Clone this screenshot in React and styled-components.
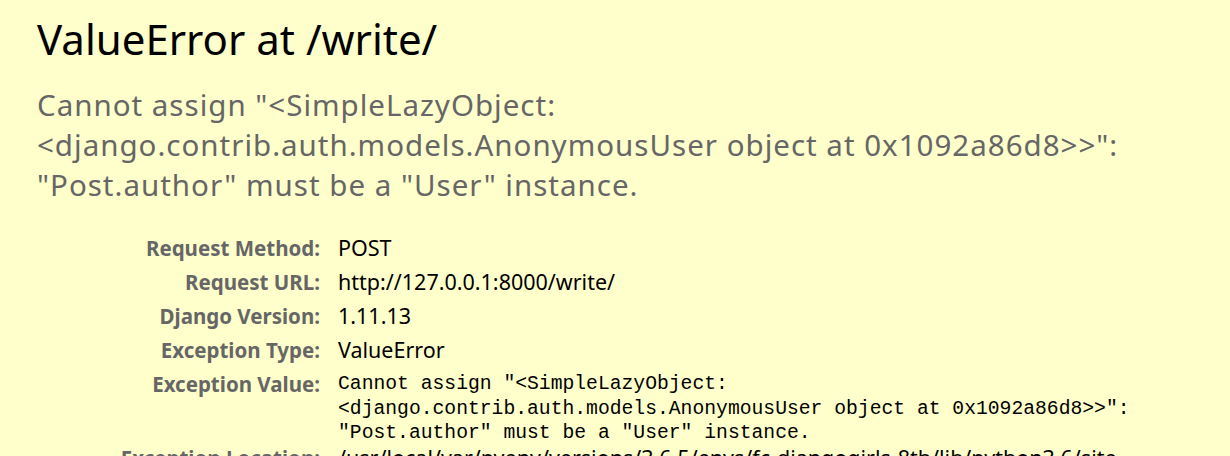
import React from 'react';
import styled, { createGlobalStyle } from 'styled-components';

const GlobalStyle = createGlobalStyle`
  html, body {
    margin: 0;
    padding: 0;
    background: #ffffcc;
  }
  body {
    font-family: "Noto Sans", "Liberation Sans", sans-serif;
    overflow: hidden;
  }
`;

const Summary = styled.div`
  background: #ffffcc;
  padding: 14px 37px 0;
  min-height: 456px;
  box-sizing: border-box;
`;

const Title = styled.h1`
  margin: 0;
  font-size: 42px;
  font-weight: 400;
  line-height: 50px;
  color: #000;
`;

const Message = styled.h2`
  margin: 21px 0 0;
  font-size: 29.5px;
  font-weight: 400;
  line-height: 40px;
  color: #666;
  letter-spacing: 1px;
`;

const Meta = styled.table`
  margin-top: 26px;
  border-collapse: collapse;
`;

const Label = styled.th`
  width: 283px;
  padding: 0 18px 0 0;
  text-align: right;
  vertical-align: top;
  font-size: 20.5px;
  font-weight: 700;
  line-height: 34px;
  color: #666;
  white-space: nowrap;
`;

const Value = styled.td`
  padding: 0;
  vertical-align: top;
  font-size: 21.5px;
  line-height: 34px;
  color: #000;
  white-space: nowrap;
`;

const Pre = styled.pre`
  margin: 5px 0 -5px;
  font-family: "Liberation Mono", "Courier New", monospace;
  font-size: 19.7px;
  line-height: 24.5px;
  color: #000;
`;

const rows = [
  { label: 'Request Method:', value: 'POST' },
  { label: 'Request URL:', value: 'http://127.0.0.1:8000/write/' },
  { label: 'Django Version:', value: '1.11.13' },
  { label: 'Exception Type:', value: 'ValueError' },
  {
    label: 'Exception Value:',
    pre: 'Cannot assign "<SimpleLazyObject:\n<django.contrib.auth.models.AnonymousUser object at 0x1092a86d8>>":\n"Post.author" must be a "User" instance.',
  },
  {
    label: 'Exception Location:',
    value: '/usr/local/var/pyenv/versions/3.6.5/envs/fc-djangogirls-8th/lib/python3.6/site-',
    more: 'packages/django/db/models/fields/related_descriptors.py in __set__, line 216',
  },
];

export default function App() {
  return (
    <>
      <GlobalStyle />
      <Summary>
        <Title>ValueError at /write/</Title>
        <Message>
          Cannot assign "&lt;SimpleLazyObject:
          <br />
          &lt;django.contrib.auth.models.AnonymousUser object at 0x1092a86d8&gt;&gt;":
          <br />
          "Post.author" must be a "User" instance.
        </Message>
        <Meta>
          <tbody>
            {rows.map((r) => (
              <tr key={r.label}>
                <Label>{r.label}</Label>
                <Value>
                  {r.pre ? <Pre>{r.pre}</Pre> : r.value}
                  {r.more && (
                    <>
                      <br />
                      {r.more}
                    </>
                  )}
                </Value>
              </tr>
            ))}
          </tbody>
        </Meta>
      </Summary>
    </>
  );
}
